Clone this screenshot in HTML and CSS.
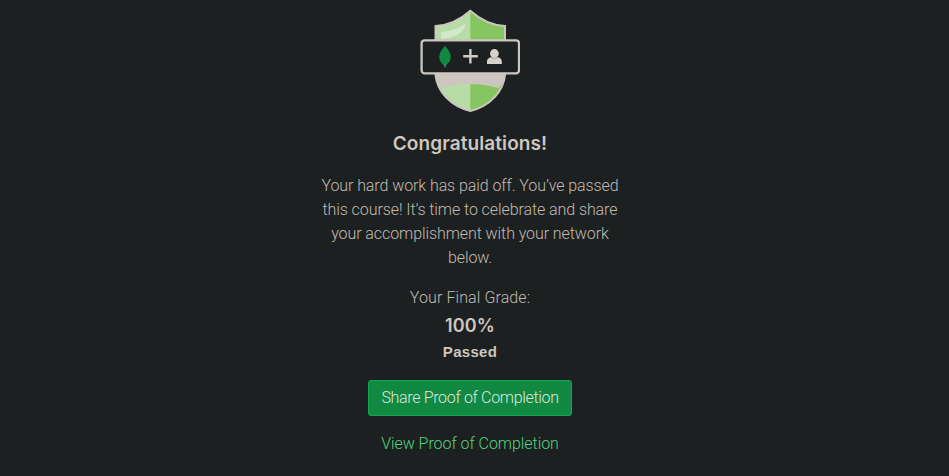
FILE: index.html
```html
<!DOCTYPE html>
<html lang="en">
<head>
<meta charset="utf-8">
<title>Congratulations</title>
<link rel="stylesheet" href="styles.css">
</head>
<body>
<main class="completion">
  <svg class="badge" width="100" height="104" viewBox="420 9 100 104" aria-hidden="true">
    <path fill="#86c660" d="M470.300 10.800C460 20 449 25.500 435.500 26V75C437 91 450 106 470.300 111C490.600 106 503.500 91 505 75V26C491.500 25.500 480.600 20 470.300 10.800Z"/>
    <path fill="#b7dca5" d="M470.300 10.800C460 20 449 25.500 435.500 26V75C437 91 450 106 470.300 111Z"/>
    <path fill="#d4e8cc" d="M441 38.500V32C452 31 459 28 465.500 23.200C465 32 455 38.500 441 38.500Z"/>
    <path fill="#cdc6c0" d="M435 73H506C505.200 79 502 84 498.500 88C480 82.500 460 82.500 442.500 88C438 84 436 79 435 73Z"/>
    <path fill="none" stroke="#cdc6c0" stroke-width="2" d="M470.300 10.800C460 20 449 25.500 435.500 26V75C437 91 450 106 470.300 111C490.600 106 503.500 91 505 75V26C491.500 25.500 480.600 20 470.300 10.800Z"/>
    <rect x="421.600" y="40.300" width="97.400" height="33" rx="3" fill="#1d2021" stroke="#cdc6c0" stroke-width="2.300"/>
    <path fill="#108a42" d="M445 46C441.500 49.800 439.200 53 439.200 57C439.200 60.500 441.500 63.500 445 66C448.500 63.500 450.800 60.500 450.800 57C450.800 53 448.500 49.800 445 46Z"/>
    <path stroke="#849087" stroke-width="1" d="M445 64.500V67.500"/>
    <path fill="none" stroke="#d1cbc5" stroke-width="2.400" d="M470.400 49V63.600M463.200 56.300H477.800"/>
    <path fill="#d6d1cb" d="M487 64V61.500C487 59 488.500 57.800 491 57.200H497.800C500.300 57.800 501.800 59 501.800 61.500V64Z"/>
    <circle cx="494.400" cy="53.500" r="4.400" fill="#d6d1cb"/>
    <path fill="none" stroke="#aaa49e" stroke-width=".8" d="M491 57C493 59.300 495.800 59.300 497.800 57"/>
  </svg>
  <h1 class="title">Congratulations!</h1>
  <p class="message">Your hard work has paid off. You’ve passed<br>this course! It’s time to celebrate and share<br>your accomplishment with your network<br>below.</p>
  <p class="grade-label">Your Final Grade:</p>
  <p class="grade">100%</p>
  <p class="status">Passed</p>
  <button class="share">Share Proof of Completion</button>
  <a class="view">View Proof of Completion</a>
</main>
</body>
</html>
```
FILE: styles.css
```css
body {
  margin: 0;
  background: #1d2021;
  color: #c1bbb2;
  font: 300 16px/24px Roboto, "Liberation Sans", sans-serif;
  letter-spacing: .1px;
}
.completion {
  display: flex;
  flex-direction: column;
  align-items: center;
  width: 940px;
  padding-top: 9px;
}
.badge { display: block; }
.title {
  margin: 19px 0 18px;
  color: #cdc7c0;
  font: 600 19px/24px Inter, "Liberation Sans", sans-serif;
  letter-spacing: .1px;
}
p { margin: 0; }
.message {
  letter-spacing: -.08px;
  text-align: center;
  white-space: nowrap;
}
.grade-label { margin-top: 16px; }
.grade {
  margin-top: 2px;
  color: #cdc7c0;
  font: 600 18px/28px Inter, "Liberation Sans", sans-serif;
  letter-spacing: .2px;
}
.status {
  color: #cdc7c0;
  font: bold 15px/24px "Liberation Sans", sans-serif;
  letter-spacing: .3px;
}
.share {
  box-sizing: border-box;
  width: 204px;
  height: 36px;
  margin-top: 16px;
  padding: 0;
  border: 1px solid #18a452;
  border-radius: 3px;
  background: #118942;
  color: #dfe6df;
  font: inherit;
  letter-spacing: -.33px;
  white-space: nowrap;
}
.view {
  margin-top: 16px;
  color: #50d57f;
  letter-spacing: -.05px;
}
```
